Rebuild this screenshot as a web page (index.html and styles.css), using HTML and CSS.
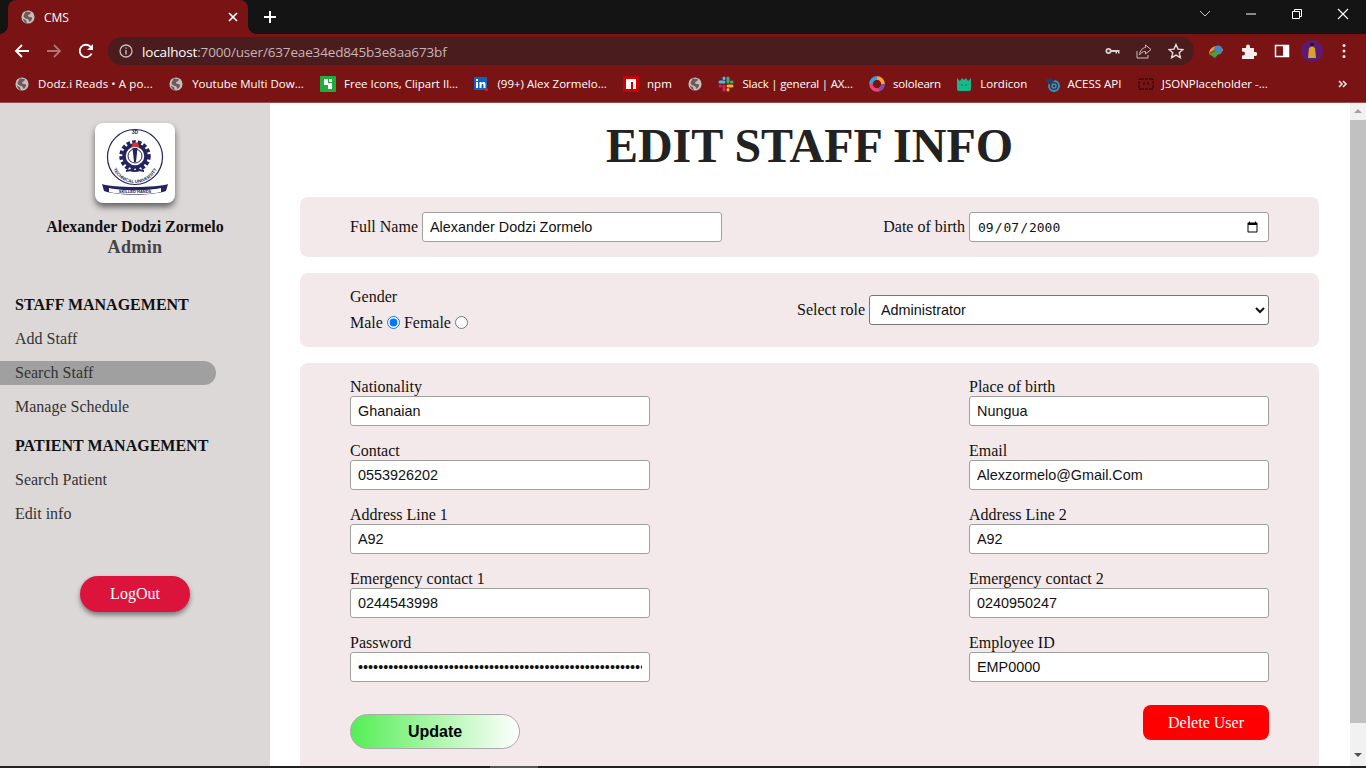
FILE: index.html
```html
<!DOCTYPE html>
<html lang="en">
<head>
<meta charset="utf-8">
<title>CMS</title>
<link rel="stylesheet" href="styles.css">
</head>
<body>
<svg class="defs" width="0" height="0" aria-hidden="true">
  <symbol id="globe" viewBox="0 0 16 16">
    <circle cx="8" cy="8" r="7.5" fill="#c4bfbf"/>
    <path d="M5.6 1.2C7 2.4 9.4 2.6 10.6 1.6 11.8 3 11 4.6 9.4 5 8 5.4 7.6 6.6 8.4 7.4 9.6 8.2 11.6 7.6 12.6 8.8 13 10.4 11.6 12.6 10 13.6 9 12.8 9 11.4 7.8 10.6 6.2 9.8 4 9.6 3.2 8 2.6 6.8 3.2 5.4 4 4.4Z" fill="#71585a"/>
    <path d="M2 9.6C3.4 10.4 5 10.8 6 12 6.4 13 6.2 14.2 6.6 15.2 4.4 14.6 2.8 12 2 9.6Z" fill="#71585a"/>
  </symbol>
</svg>

<header class="browser">
  <div class="titlebar">
    <div class="tab">
      <svg class="ico14"><use href="#globe"/></svg>
      <span class="tab-title">CMS</span>
      <svg class="tab-close" viewBox="0 0 10 10"><path d="M1 1l8 8M9 1l-8 8" stroke="#fff" stroke-width="1.7"/></svg>
    </div>
    <svg class="new-tab" viewBox="0 0 12 12"><path d="M6 0v12M0 6h12" stroke="#fff" stroke-width="2"/></svg>
    <div class="winctl">
      <svg class="win" viewBox="0 0 46 16"><path d="M18 5l5 5 5-5" fill="none" stroke="#c8c8c8"/></svg>
      <svg class="win" viewBox="0 0 46 16"><path d="M18 8h10" stroke="#fff"/></svg>
      <svg class="win" viewBox="0 0 46 16"><path d="M18.500 5.500h7v7h-7zM20.500 5.500v-2h7v7h-2" fill="none" stroke="#fff"/></svg>
      <svg class="win" viewBox="0 0 46 16"><path d="M18 3l10 10M28 3L18 13" stroke="#fff" stroke-width="1.100"/></svg>
    </div>
  </div>
  <div class="toolbar">
    <svg class="nav" viewBox="0 0 16 16"><path d="M15 8H2M8 2L2 8l6 6" fill="none" stroke="#fff" stroke-width="1.800"/></svg>
    <svg class="nav" viewBox="0 0 16 16"><path d="M1 8h13M8 2l6 6-6 6" fill="none" stroke="#ad7474" stroke-width="1.800"/></svg>
    <svg class="nav" viewBox="0 0 16 16"><path d="M13.600 10.500A6.200 6.200 0 1 1 12.400 3.600L14.500 5.500" fill="none" stroke="#fff" stroke-width="1.800"/><path d="M15 1v6H9z" fill="#fff"/></svg>
    <div class="omnibox">
      <svg class="ico14 info" viewBox="0 0 14 14"><circle cx="7" cy="7" r="6" fill="none" stroke="#c9bcbc" stroke-width="1.300"/><path d="M7 6v4.500M7 3.500v1.300" stroke="#c9bcbc" stroke-width="1.400"/></svg>
      <span class="url"><b class="host">localhost</b>:7000/user/637eae34ed845b3e8aa673bf</span>
      <span class="omni-actions">
        <svg class="omni-ico" viewBox="0 0 16 16"><circle cx="4.500" cy="8" r="3" fill="#d8cfcf"/><circle cx="4.500" cy="8" r="1.200" fill="#4a1c1e"/><path d="M7 7h8.500v3.500H14V9h-1v1.500h-1.500V9H7z" fill="#d8cfcf"/></svg>
        <svg class="omni-ico" viewBox="0 0 16 16"><path d="M1 8v7h11v-3" fill="none" stroke="#c9bcbc"/><path d="M9.500 2l5.500 4.500-5.500 4.500V8.500C7 8.500 4.800 9.500 3.500 12 3.800 8 6 5 9.500 4.500z" fill="none" stroke="#c9bcbc"/></svg>
        <svg class="omni-ico" viewBox="0 0 16 16"><path d="M8 1.500l2 4.600 5 .4-3.800 3.300 1.200 4.900L8 12.100l-4.400 2.600 1.200-4.900L1 6.500l5-.4z" fill="none" stroke="#e6dede" stroke-width="1.400"/></svg>
      </span>
    </div>
    <div class="ext">
      <svg class="ext-ico" viewBox="0 0 16 16"><path d="M1 11C1 6 5 3 9 3c3 0 6 2 6 5-3-1-9-1-14 3z" fill="#e2a82c"/><circle cx="10" cy="7" r="4.500" fill="#3f88c9"/><path d="M1 11c3-2 7-3 11-2l-5 6z" fill="#3fa53c"/><path d="M2 10c2-1 3-2 5-2" stroke="#c8322c" fill="none" stroke-width="1.500"/></svg>
      <svg class="ext-ico" viewBox="0 0 16 16"><path d="M1 5h4V3.500a2 2 0 0 1 4 0V5h4v4h1.200a2 2 0 0 1 0 4H13v3H1v-3.500h1a2 2 0 0 0 0-4H1z" fill="#f4eeee"/></svg>
      <svg class="ext-ico" viewBox="0 0 16 16"><path d="M1.500 2.500h13v11h-13z" fill="#7a1414" stroke="#fff" stroke-width="1.500"/><path d="M9 2.500h5.500v11H9z" fill="#fff"/></svg>
      <svg class="avatar" viewBox="0 0 22 22"><circle cx="11" cy="11" r="11" fill="#5d1a70"/><path d="M8 8l3-2 3 2 1 10H7z" fill="#d6a52e"/><circle cx="11" cy="4.500" r="1.800" fill="#1c1020"/></svg>
      <svg class="ext-ico dots" viewBox="0 0 16 16"><circle cx="8" cy="2.500" r="1.500" fill="#eee"/><circle cx="8" cy="8" r="1.500" fill="#eee"/><circle cx="8" cy="13.500" r="1.500" fill="#eee"/></svg>
    </div>
  </div>
  <nav class="bookmarks">
    <span class="bm"><svg class="ico14"><use href="#globe"/></svg><span class="wide">Dodz.i Reads • A po...</span></span>
    <span class="bm"><svg class="ico14"><use href="#globe"/></svg><span>Youtube Multi Dow...</span></span>
    <span class="bm"><svg class="ico16" viewBox="0 0 16 16"><rect width="16" height="16" rx="1" fill="#1fae3c"/><path d="M4 3h4v4h4v6H8V9H4zM9 3h3v3H9z" fill="#fff"/></svg><span>Free Icons, Clipart Il...</span></span>
    <span class="bm"><svg class="ico14" viewBox="0 0 14 14"><rect width="13" height="13" fill="#0a66c2"/><path d="M2 5h2v6H2zM2 2h2v2H2zM5.500 5h2v1c1-1.500 4-1.500 4 1v4h-2V8c0-1.500-2-1.500-2 0v3h-2z" fill="#fff"/><circle cx="12.500" cy="12.500" r="1.500" fill="#e2202c"/></svg><span>(99+) Alex Zormelo...</span></span>
    <span class="bm"><svg class="ico16" viewBox="0 0 16 16"><rect width="16" height="16" fill="#cb0000"/><path d="M3 3h10v10h-3V6H8v7H3z" fill="#fff"/></svg><span>npm</span></span>
    <span class="bm"><svg class="ico14"><use href="#globe"/></svg></span>
    <span class="bm"><svg class="ico16" viewBox="0 0 16 16"><g fill="none" stroke-width="3" stroke-linecap="round"><path d="M6 2v.5M6 6H2" stroke="#36c5f0"/><path d="M14 6h-.5M10 6V2" stroke="#2eb67d"/><path d="M10 14v-.5M10 10h4" stroke="#ecb22e"/><path d="M2 10h.5M6 10v4" stroke="#e01e5a"/></g></svg><span class="tight">Slack | general | AX...</span></span>
    <span class="bm"><svg class="ico16" viewBox="0 0 16 16"><circle cx="8" cy="8" r="6" fill="none" stroke="#e8457a" stroke-width="3.500"/><path d="M8 2a6 6 0 0 1 6 6" fill="none" stroke="#f5a623" stroke-width="3.500"/><path d="M14 8a6 6 0 0 1-4 5.600" fill="none" stroke="#7b4fa6" stroke-width="3.500"/><path d="M2 8a6 6 0 0 1 6-6" fill="none" stroke="#2ea4d8" stroke-width="3.500"/></svg><span class="tight">sololearn</span></span>
    <span class="bm"><svg class="ico14" viewBox="0 0 14 14"><path d="M0 1l3 3 2-3 2 2 2-2 2 3 3-3v11a2 2 0 0 1-2 2H2a2 2 0 0 1-2-2z" fill="#17b78a"/><path d="M4 8h2M8 8h2" stroke="#0c7a5c"/></svg><span>Lordicon</span></span>
    <span class="bm"><svg class="ico16" viewBox="0 0 16 16"><circle cx="10" cy="10" r="5" fill="none" stroke="#1aa3d9" stroke-width="1.800"/><circle cx="10" cy="10" r="2" fill="none" stroke="#1aa3d9" stroke-width="1.500"/><path d="M1 3l4 1 1-3 2 3 3 0-5 5z" fill="#23406d"/></svg><span>ACESS API</span></span>
    <span class="bm"><svg class="ico16" viewBox="0 0 16 16"><path d="M3 3H1v10h2M13 3h2v10h-2M3 3h10M3 13h10M6 6v4M10 6v4" fill="none" stroke="#140808" stroke-dasharray="3 1"/></svg><span>JSONPlaceholder -...</span></span>
    <svg class="more" viewBox="0 0 10 10"><path d="M1 2l3 3-3 3M5 2l3 3-3 3" fill="none" stroke="#f2e6e6" stroke-width="1.600"/></svg>
  </nav>
</header>

<div class="app">
  <aside class="sidebar">
    <div class="logo-card">
      <svg class="logo" viewBox="0 0 80 80">
        <defs><path id="arc" d="M16 36a24 24 0 0 0 48 0"/></defs>
        <circle cx="40" cy="34" r="27.500" fill="none" stroke="#23235e" stroke-width="1.200"/>
        <circle cx="40" cy="33" r="13.500" fill="none" stroke="#23235e" stroke-width="4.500" stroke-dasharray="3.500 2"/>
        <circle cx="40" cy="33" r="11" fill="none" stroke="#23235e" stroke-width="3.500"/>
        <circle cx="40" cy="33" r="7" fill="#fff" stroke="#23235e" stroke-width="1"/>
        <path d="M37.500 25h5l-1.500 14h-2z" fill="#23235e"/>
        <path d="M36.500 24c0-3 2-3 2-5l1 1 1-3 1 3 1-1c1 2 1.500 3 1.500 5z" fill="#d8322e"/>
        <path d="M31 47c3-1 6-1 9 0 3-1 6-1 9 0v2c-3-1-6-1-9 0-3-1-6-1-9 0z" fill="#23235e"/>
        <text class="logo-top" x="40" y="11" text-anchor="middle">3D</text>
        <text class="logo-curve"><textPath href="#arc" startOffset="50%" text-anchor="middle">TECHNICAL UNIVERSITY</textPath></text>
        <path d="M7 61c10 4 56 4 66 0l-2 7c-16 5-46 5-62 0z" fill="#23235e"/>
        <path d="M14 65c12 3 40 3 52 0v4c-12 3-40 3-52 0z" fill="#fff"/>
        <text class="logo-band" x="40" y="70" text-anchor="middle">SKILLED HANDS</text>
      </svg>
    </div>
    <h2 class="user-name">Alexander Dodzi Zormelo</h2>
    <h3 class="user-role">Admin</h3>
    <h4 class="side-head first">STAFF MANAGEMENT</h4>
    <a class="side-link">Add Staff</a>
    <a class="side-link active">Search Staff</a>
    <a class="side-link">Manage Schedule</a>
    <h4 class="side-head">PATIENT MANAGEMENT</h4>
    <a class="side-link">Search Patient</a>
    <a class="side-link">Edit info</a>
    <button class="logout" type="button">LogOut</button>
  </aside>

  <main class="main">
    <h1 class="page-title">EDIT STAFF INFO</h1>
    <form class="form">
      <section class="panel panel-a">
        <label class="inline">Full Name <input class="field" type="text" value="Alexander Dodzi Zormelo"></label>
        <label class="inline">Date of birth <input class="field date" type="date" value="2000-09-07"></label>
      </section>
      <section class="panel panel-b">
        <div class="gender">
          <div class="gender-title">Gender</div>
          <div class="gender-opts">Male <input class="radio" type="radio" name="g" checked> Female <input class="radio" type="radio" name="g"></div>
        </div>
        <label class="inline">Select role <select class="field role"><option>Administrator</option></select></label>
      </section>
      <section class="panel panel-c">
        <div class="col">
          <label class="stack">Nationality<input class="field" type="text" value="Ghanaian"></label>
          <label class="stack">Contact<input class="field" type="text" value="0553926202"></label>
          <label class="stack">Address Line 1<input class="field" type="text" value="A92"></label>
          <label class="stack">Emergency contact 1<input class="field" type="text" value="0244543998"></label>
          <label class="stack">Password<input class="field" type="password" value="aaaaaaaaaaaaaaaaaaaaaaaaaaaaaaaaaaaaaaaaaaaaaaaaaaaaaaaaaaaaaaaaaaaaaaaa"></label>
          <button class="update" type="button">Update</button>
        </div>
        <div class="col">
          <label class="stack">Place of birth<input class="field" type="text" value="Nungua"></label>
          <label class="stack">Email<input class="field" type="text" value="Alexzormelo@Gmail.Com"></label>
          <label class="stack">Address Line 2<input class="field" type="text" value="A92"></label>
          <label class="stack">Emergency contact 2<input class="field" type="text" value="0240950247"></label>
          <label class="stack">Employee ID<input class="field" type="text" value="EMP0000"></label>
          <button class="delete" type="button">Delete User</button>
        </div>
      </section>
    </form>
  </main>

  <div class="scrollbar">
    <span class="arrow up"></span>
    <span class="thumb"></span>
    <span class="arrow down"></span>
  </div>
</div>
<div class="taskstrip"><span class="task-seg"></span></div>
</body>
</html>
```

FILE: styles.css
```css
* { box-sizing: border-box; }
html, body { margin: 0; height: 100%; overflow: hidden; }
body { display: flex; flex-direction: column; height: 768px; font-family: "Liberation Serif", serif; font-size: 16px; color: #111; background: #fff; }
.defs { position: absolute; }

.browser { flex: none; height: 103px; background: #7a1414; border-bottom: 1px solid #9c4c4c; font-family: "Open Sans", sans-serif; color: #fff; }
.ico14 { width: 14px; height: 14px; flex: none; display: block; }
.ico16 { width: 16px; height: 16px; flex: none; display: block; }

.titlebar { height: 34px; background: #141414; display: flex; align-items: flex-start; padding-left: 8px; }
.tab { position: relative; width: 240px; height: 34px; background: #7a1414; border-radius: 8px 8px 0 0; display: flex; align-items: center; padding: 0 10px 0 13px; font-size: 12px; }
.tab::before, .tab::after { content: ""; position: absolute; bottom: 0; width: 8px; height: 8px; background: radial-gradient(circle at 0 0, #141414 7.500px, #7a1414 8px); }
.tab::before { left: -8px; }
.tab::after { right: -8px; background: radial-gradient(circle at 100% 0, #141414 7.500px, #7a1414 8px); }
.tab-title { margin-left: 9px; flex: 1; }
.tab-close { width: 10px; height: 10px; }
.new-tab { width: 12px; height: 12px; margin: 11px 0 0 16px; }
.winctl { margin-left: auto; display: flex; }
.win { width: 46px; height: 16px; margin-top: 6px; display: block; }

.toolbar { height: 34px; display: flex; align-items: center; padding-left: 14px; }
.nav { width: 16px; height: 16px; margin-right: 16px; flex: none; }
.omnibox { width: 1086px; height: 28px; margin-left: -2px; background: #4a1c1e; border-radius: 14px; display: flex; align-items: center; padding: 0 10px 0 11px; font-size: 13.500px; }
.info { margin-right: 9px; }
.url { color: #c8b4b4; white-space: nowrap; letter-spacing: -.15px; padding-top: 2px; }
.host { color: #fff; font-weight: 400; }
.omni-actions { margin-left: auto; display: flex; gap: 16px; align-items: center; }
.omni-ico { width: 16px; height: 16px; display: block; }
.ext { display: flex; align-items: center; margin-left: 14px; gap: 17px; }
.ext-ico { width: 16px; height: 16px; display: block; flex: none; }
.avatar { width: 22px; height: 22px; margin: 0 -6px; display: block; }
.dots { margin-left: 2px; }

.bookmarks { height: 34px; display: flex; align-items: center; padding: 0 0 2px 15px; gap: 16.300px; font-size: 11.500px; white-space: nowrap; position: relative; }
.bm { display: flex; align-items: center; gap: 9px; }
.bm > span { margin-top: -2px; }
.bm .ico16 { margin-right: -1px; }
.tight { letter-spacing: -.2px; }
.wide { letter-spacing: .1px; }
.more { position: absolute; left: 1338px; top: 11px; width: 10px; height: 10px; }

.app { flex: 1; min-height: 0; display: flex; overflow: hidden; }
.sidebar { flex: none; width: 270px; background: #dcd8d8; display: flex; flex-direction: column; padding-top: 20px; }
.logo-card { align-self: center; width: 80px; height: 80px; background: #fff; border-radius: 8px; box-shadow: 0 4px 6px rgba(0,0,0,.55); }
.logo { width: 80px; height: 80px; display: block; }
.logo-top { font: bold 5px "Liberation Sans", sans-serif; fill: #23235e; }
.logo-curve { font: bold 4.500px "Liberation Sans", sans-serif; fill: #23235e; }
.logo-band { font: bold 4px "Liberation Sans", sans-serif; fill: #23235e; }
.user-name { margin: 15px 0 0; font-size: 16px; line-height: 18px; text-align: center; color: #111; }
.user-role { margin: 1px 0 0; font-size: 18px; line-height: 20px; text-align: center; color: #444; letter-spacing: .4px; }
.side-head { margin: 0; padding-left: 15px; font-size: 16px; line-height: 18px; color: #111; }
.side-head.first { margin-top: 39px; margin-bottom: 13px; }
.side-head:not(.first) { margin-top: 8px; margin-bottom: 13px; }
.side-link { display: block; width: 216px; height: 24px; margin-bottom: 10px; padding-left: 15px; font-size: 16px; line-height: 24px; color: #333; border-radius: 0 12px 12px 0; }
.side-link.active { background: #a0a0a0; }
.logout { align-self: flex-start; margin: 40px 0 0 80px; width: 110px; height: 36px; border: 0; border-radius: 18px; background: #dc143c; color: #fff; font: 16px "Liberation Serif", serif; box-shadow: 0 3px 5px rgba(0,0,0,.45); }

.main { flex: 1; min-width: 0; padding: 0 31px 0 30px; }
.page-title { margin: 0; height: 94px; font-size: 48px; line-height: 86px; text-align: center; color: #222; }
.form { display: flex; flex-direction: column; gap: 16px; }
.panel { background: #f3e9ea; border-radius: 8px; padding: 0 50px; display: flex; justify-content: space-between; }
.panel-a { height: 60px; align-items: center; }
.panel-b { height: 74px; align-items: center; }
.panel-c { padding-top: 15px; padding-bottom: 40px; }
.inline { display: flex; align-items: center; gap: 4px; }
.field { width: 300px; height: 30px; margin: 0; padding: 1px 7px; border: 1px solid #a0a0a0; border-radius: 3px; background: #fff; color: #111; font: 14.400px "Liberation Sans", sans-serif; }
.date { font-family: "DejaVu Sans Mono", monospace; font-size: 13px; }
.role { width: 400px; border-color: #767676; padding-left: 7px; font-size: 14.400px; }
.gender { padding-bottom: 1px; }
.gender-title { line-height: 18px; margin-bottom: 8px; }
.gender-opts { line-height: 18px; }
.radio { margin: 2px 0 0 0; vertical-align: top; }
.col { width: 300px; display: flex; flex-direction: column; gap: 16px; }
.stack { display: block; line-height: 18px; }
.stack .field { display: block; }
.update { width: 170px; height: 35px; margin-top: 16px; border: 1px solid #aaa; border-radius: 18px; background: linear-gradient(to right, #55ee55, #fff); color: #000; font: bold 16px "Liberation Sans", sans-serif; }
.delete { align-self: flex-end; width: 126px; height: 35px; margin-top: 7px; border: 0; border-radius: 8px; background: #f00; color: #fff; font: 16px "Liberation Serif", serif; }

.scrollbar { flex: none; width: 16px; background: #f1f1f1; display: flex; flex-direction: column; align-items: center; }
.arrow { flex: none; width: 0; height: 0; border-left: 4px solid transparent; border-right: 4px solid transparent; }
.arrow.up { margin-top: 6px; border-bottom: 4px solid #a3a3a3; }
.arrow.down { margin-top: 30px; border-top: 4px solid #505050; }
.thumb { flex: none; width: 16px; height: 603px; margin-top: 7px; background: #c1c1c1; }
.taskstrip { flex: none; height: 2px; background: #222; padding-left: 490px; }
.task-seg { display: block; width: 48px; height: 2px; background: #555; }
```
